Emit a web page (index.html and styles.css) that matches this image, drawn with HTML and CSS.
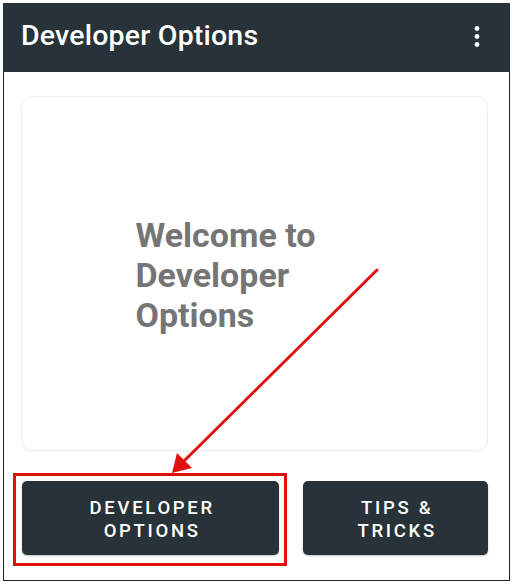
FILE: index.html
```html
<!DOCTYPE html>
<html>
<head>
<meta charset="utf-8">
<link rel="stylesheet" href="styles.css">
</head>
<body>
<div class="frame">
  <header class="appbar">
    <h1 class="title">Developer Options</h1>
    <svg class="menu" width="24" height="24" viewBox="0 0 24 24"><circle cx="12" cy="4.5" r="2.4" fill="#fff"/><circle cx="12" cy="12.5" r="2.4" fill="#fff"/><circle cx="12" cy="20.5" r="2.4" fill="#fff"/></svg>
  </header>
  <main class="content">
    <section class="card">
      <p class="welcome">Welcome to Developer Options</p>
    </section>
    <div class="actions">
      <button class="btn btn-dev">DEVELOPER<br>OPTIONS</button>
      <button class="btn">TIPS &amp;<br>TRICKS</button>
    </div>
  </main>
  <div class="highlight"></div>
  <svg class="arrow" width="514" height="586" viewBox="0 0 514 586">
    <line x1="377" y1="270" x2="182" y2="463" stroke="#e01010" stroke-width="3" stroke-linecap="round"/>
    <polygon points="172,473 177,453 192,468" fill="#e01010"/>
  </svg>
</div>
</body>
</html>
```
FILE: styles.css
```css
html, body {
  margin: 0;
  padding: 0;
  background: #fff;
}
body {
  padding: 3px;
  font-family: Roboto, "Noto Sans", sans-serif;
}
.frame {
  position: relative;
  width: 505px;
  height: 577px;
  border: 1px solid #222;
  border-top: 0;
  display: flex;
  flex-direction: column;
}
.appbar {
  height: 69px;
  background: #283339;
  display: flex;
  align-items: center;
  justify-content: space-between;
  padding: 0 21px 4px 18px;
  box-sizing: border-box;
  margin: 0 -1px;
}
.title {
  margin: 0;
  color: #fff;
  font-size: 28.5px;
  font-weight: 500;
  letter-spacing: 0.2px;
}
.menu {
  display: block;
}
.content {
  flex: 1;
  display: flex;
  flex-direction: column;
  padding: 24px 21px 25px 17px;
}
.card {
  height: 353px;
  border: 1px solid #eeeeee;
  border-radius: 11px;
  box-shadow: 0 1px 2px rgba(0,0,0,0.04);
  display: flex;
  align-items: center;
  justify-content: center;
}
.welcome {
  margin: 0;
  width: 236px;
  color: #757575;
  font-size: 34px;
  font-weight: 700;
  line-height: 40px;
  position: relative;
  top: 1px;
  left: -1px;
}
.actions {
  margin-top: auto;
  display: grid;
  grid-template-columns: 258fr 185fr;
  gap: 24px;
  padding-left: 1px;
}
.btn {
  height: 74px;
  border: 0;
  border-radius: 5px;
  background: #283339;
  color: #fff;
  font-family: Roboto, "Noto Sans", sans-serif;
  font-size: 18.5px;
  font-weight: 500;
  letter-spacing: 2.7px;
  line-height: 23px;
  text-align: center;
  padding: 3px 0 0 3px;
  box-shadow: 0 1px 2px rgba(0,0,0,0.25);
}
.highlight {
  position: absolute;
  left: 9px;
  top: 470px;
  width: 268px;
  height: 87px;
  border: 3px solid #e01010;
}
.arrow {
  position: absolute;
  left: -4px;
  top: -3px;
  pointer-events: none;
}
```
